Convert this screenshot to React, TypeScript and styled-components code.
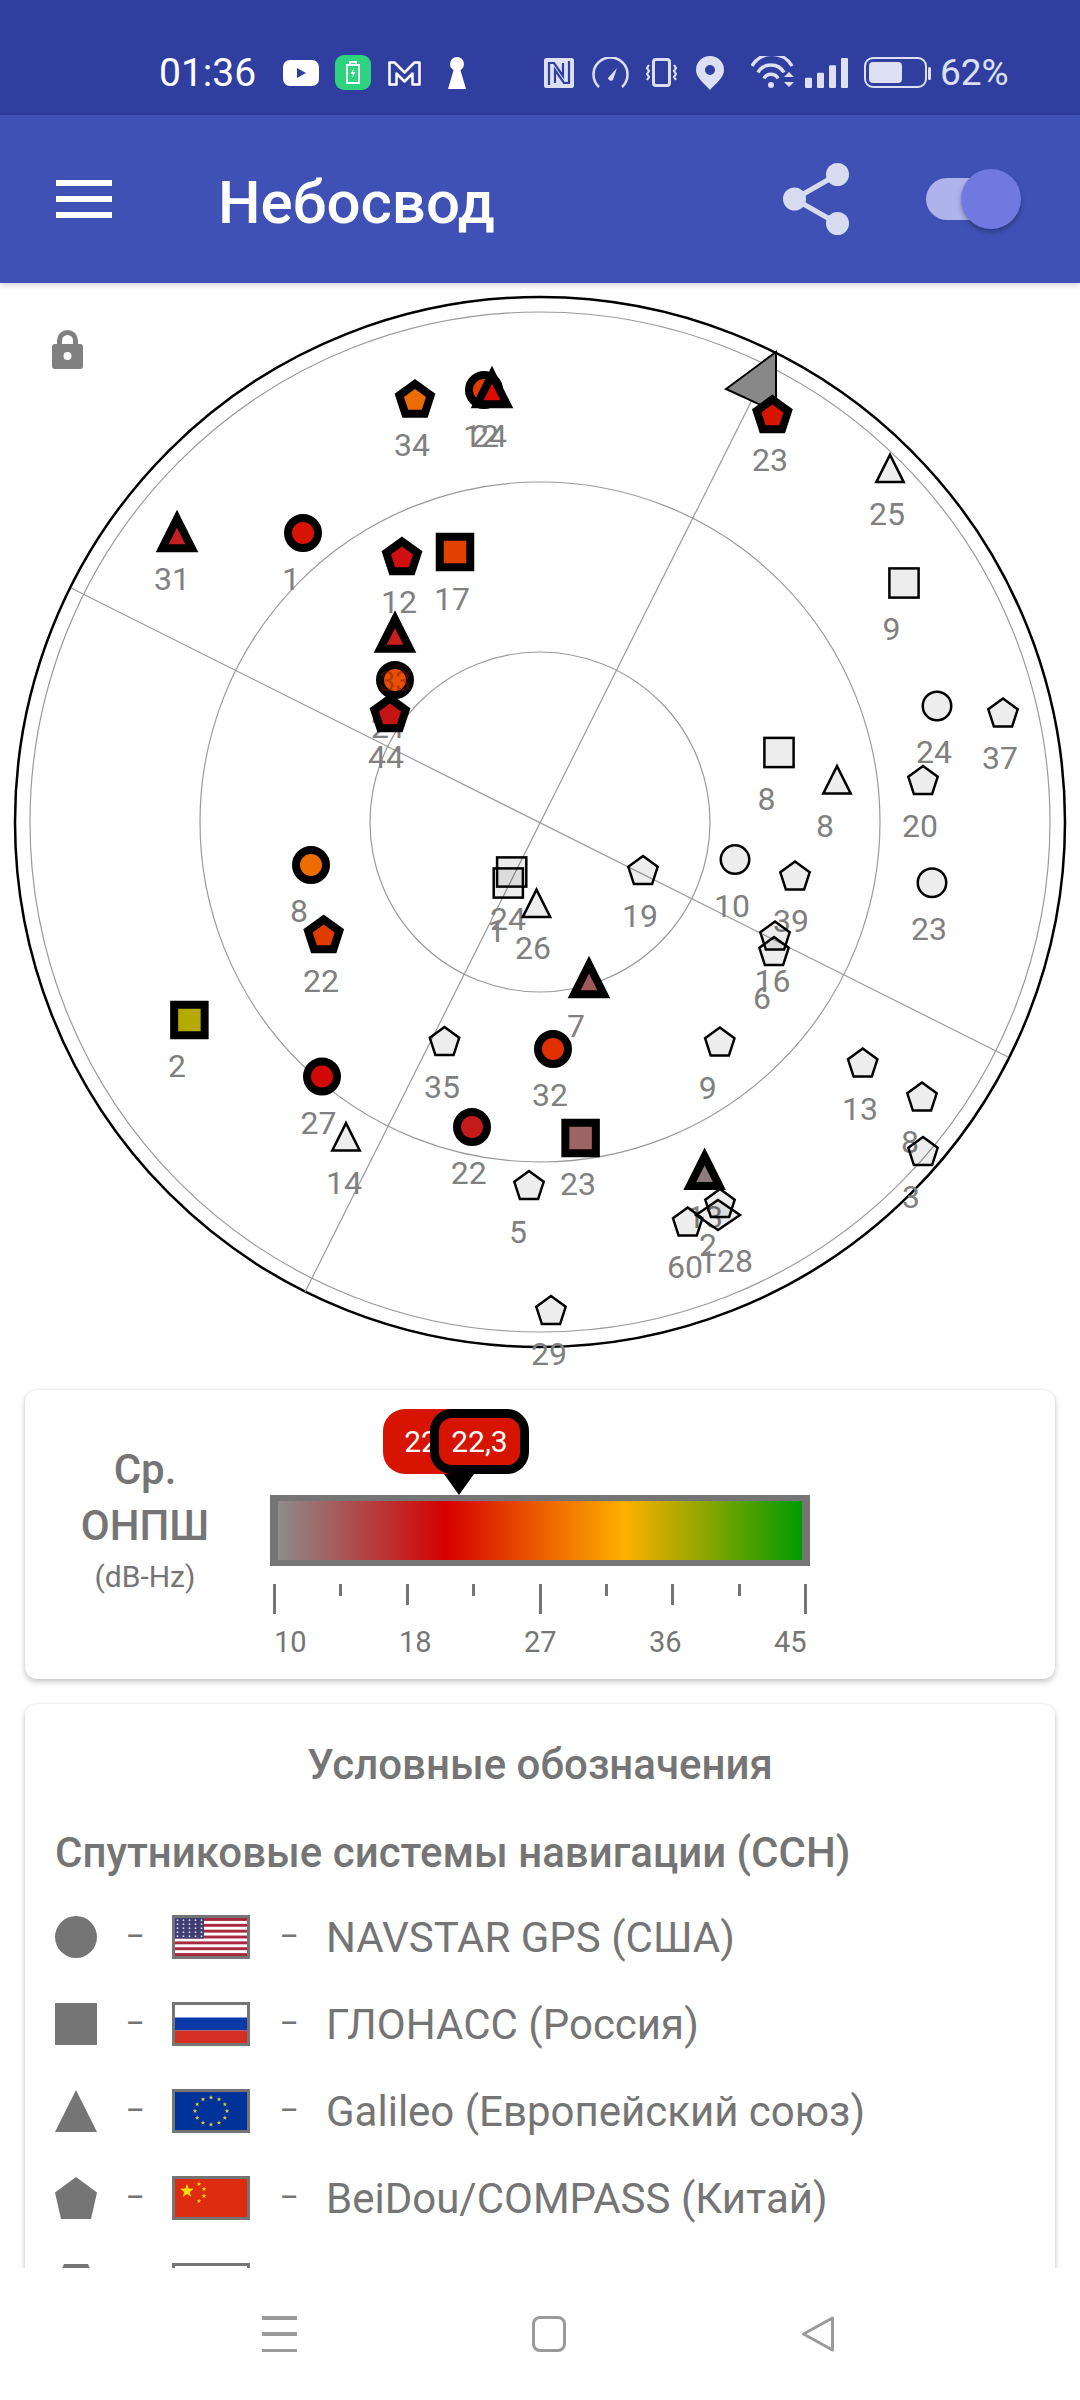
import styled, { createGlobalStyle } from "styled-components";

const GlobalStyle = createGlobalStyle`
    html, body {
        margin: 0;
        padding: 0;
        background: #fff;
        font-family: "Roboto", "Liberation Sans", sans-serif;
    }
`;

type Kind = "circle" | "square" | "triangle" | "pentagon" | "diamond";
type Sat = [Kind, number, number, string?];

// x, y = centre of the symbol's outer box, in page pixels. A fill colour means "used in fix"
const SATS: Sat[] = [
    ["pentagon", 415, 398.5, "#EC6C00"],
    ["circle", 484, 390, "#E03C00"],
    ["triangle", 492, 387, "#DD0C00"],
    ["triangle", 177, 531, "#C42020"],
    ["circle", 303, 533, "#D61400"],
    ["pentagon", 402, 556, "#D01010"],
    ["square", 455, 552, "#E04000"],
    ["triangle", 395, 631.5, "#C81E1E"],
    ["circle", 395, 680, "#E85000"],
    ["pentagon", 390, 713, "#C41414"],
    ["pentagon", 772.4, 414, "#D61400"],
    ["triangle", 890, 467.7],
    ["square", 904, 583],
    ["circle", 937, 706],
    ["pentagon", 1003, 712.5],
    ["square", 779, 752.5],
    ["triangle", 837, 779],
    ["pentagon", 923, 780],
    ["circle", 311, 865, "#EC6C00"],
    ["pentagon", 323.7, 934, "#E03C00"],
    ["square", 189.4, 1020, "#B4AA00"],
    ["circle", 322, 1076.5, "#D00808"],
    ["triangle", 346, 1136],
    ["pentagon", 444.5, 1041],
    ["circle", 472, 1127, "#C41A1A"],
    ["pentagon", 529, 1185],
    ["square", 511.7, 872],
    ["square", 508.3, 883],
    ["triangle", 536.5, 902.5],
    ["pentagon", 643, 870],
    ["circle", 735, 859.6],
    ["pentagon", 795, 875.5],
    ["pentagon", 775, 935.5],
    ["pentagon", 774, 951],
    ["circle", 932, 882.7],
    ["triangle", 589, 977, "#A05858"],
    ["circle", 553, 1049, "#E03000"],
    ["pentagon", 719.8, 1041.5],
    ["pentagon", 862.7, 1062.5],
    ["pentagon", 922, 1096.5],
    ["pentagon", 923, 1151],
    ["square", 580.6, 1138, "#9C6464"],
    ["triangle", 704.6, 1168.7, "#8C7C7C"],
    ["pentagon", 720, 1203],
    ["diamond", 718, 1215],
    ["pentagon", 687.7, 1221.5],
    ["pentagon", 551, 1310],
];

const LABELS: [string, number, number][] = [
    ["34", 412, 445], ["12", 481, 436], ["24", 489, 436], ["31", 172, 579], ["1", 291, 579],
    ["12", 399, 602], ["17", 452, 599], ["21", 389, 727], ["44", 386, 757], ["23", 770, 460],
    ["25", 887, 514], ["9", 891.6, 628.5], ["24", 934, 752], ["37", 1000, 758], ["8", 766.6, 799],
    ["8", 825, 825.5], ["20", 920, 825.5], ["8", 299, 911], ["22", 321, 981], ["2", 177, 1066],
    ["27", 318.5, 1122.7], ["14", 344, 1183], ["35", 442, 1086.5], ["22", 468.7, 1172.6],
    ["5", 518, 1232], ["24", 508, 918.5], ["1", 496.5, 930.5], ["26", 533, 948], ["19", 640, 916],
    ["10", 732, 906], ["39", 791, 921], ["16", 772.4, 981], ["6", 762, 997.7], ["23", 929, 929],
    ["7", 576, 1026], ["32", 550, 1095], ["9", 707.7, 1088], ["13", 860, 1108.5], ["8", 910, 1142],
    ["3", 911, 1196.7], ["23", 578, 1183.6], ["13", 705, 1216.7], ["2", 708, 1245], ["1", 707.7, 1261.7],
    ["28", 735, 1260.7], ["60", 685, 1266.7], ["29", 549, 1354],
];

const polygon = (pts: number[][]) => pts.map((p) => p.map((v) => v.toFixed(1)).join(",")).join(" ");

const pentagon = (cx: number, cy: number, r: number) =>
    polygon(
        [0, 1, 2, 3, 4].map((i) => {
            const a = -Math.PI / 2 + (i * 2 * Math.PI) / 5;
            return [cx + r * Math.cos(a), cy + r * Math.sin(a)];
        })
    );

const star = (cx: number, cy: number, r: number) =>
    polygon(
        Array.from({ length: 10 }, (_, i) => {
            const a = -Math.PI / 2 + (i * Math.PI) / 5;
            const d = i % 2 ? r * 0.42 : r;
            return [cx + d * Math.cos(a), cy + d * Math.sin(a)];
        })
    );

const SatSymbol = ({ sat }: { sat: Sat }) => {
    const [kind, x, y, fill] = sat;
    const strong = !!fill;
    const props = { $fill: fill };
    if (kind === "circle") return <SatCircle {...props} cx={x} cy={y} r={strong ? 15 : 14.25} />;
    if (kind === "square") {
        const s = strong ? 30.5 : 29.2;
        return <SatRect {...props} x={x - s / 2} y={y - s / 2} width={s} height={s} />;
    }
    if (kind === "pentagon") {
        return strong ? (
            <SatPoly {...props} points={pentagon(x, y + 2, 16.5)} />
        ) : (
            <SatPoly {...props} points={pentagon(x, y + 1.6, 15.5)} />
        );
    }
    if (kind === "diamond") {
        return <SatPoly {...props} points={polygon([[x, y - 15], [x + 22, y], [x, y + 15], [x - 22, y]])} />;
    }
    const pts = strong
        ? [[x, y - 21.2 + 8.9], [x + 14.8, y + 21.2 - 4], [x - 14.8, y + 21.2 - 4]]
        : [[x, y - 15.7 + 2.8], [x + 13.7, y + 15.7 - 1.25], [x - 13.7, y + 15.7 - 1.25]];
    return <SatPoly {...props} points={polygon(pts)} />;
};

const Radar = () => (
    <RadarSvg viewBox="0 283 1080 1107">
        <OuterRing cx={540} cy={822} r={525} />
        <Ring cx={540} cy={822} r={510} />
        <Ring cx={540} cy={822} r={340} />
        <Ring cx={540} cy={822} r={170} />
        <Ring as="line" x1={71} y1={588} x2={1008} y2={1057} />
        <Ring as="line" x1={305} y1={1292} x2={776} y2={352} />
        <path
            d="M52 347a3 3 0 0 1 3-3h2v-3.500a10.500 10.500 0 0 1 21 0v3.500h2a3 3 0 0 1 3 3v19a3 3 0 0 1-3 3H55a3 3 0 0 1-3-3zM62 344h11v-3.500a5.500 5.500 0 0 0-11 0zM67.500 352a4 4 0 1 0 0 8 4 4 0 0 0 0-8z"
            fill="#808080"
            fillRule="evenodd"
        />
        {LABELS.map(([t, x, y], i) => (
            <SatLabel key={i} x={x} y={y + 11.3}>
                {t}
            </SatLabel>
        ))}
        <NorthMark points="776,352 726,389 776,412" />
        {SATS.map((s, i) => (
            <SatSymbol key={i} sat={s} />
        ))}
        <GhostLabel x={395} y={690.5}>
            33
        </GhostLabel>
    </RadarSvg>
);

const USFlag = () => (
    <svg width="72" height="38" viewBox="0 0 72 38">
        <rect width="72" height="38" fill="#fff" />
        {Array.from({ length: 7 }, (_, i) => (
            <rect key={i} y={i * 5.85} width="72" height="2.92" fill="#A8283F" />
        ))}
        <rect width="29" height="20.500" fill="#3F3D73" />
        {Array.from({ length: 25 }, (_, i) => (
            <circle key={i} cx={2.5 + (i % 5) * 6} cy={2.2 + Math.floor(i / 5) * 4} r="0.9" fill="#dcdcec" />
        ))}
    </svg>
);

const RUFlag = () => (
    <svg width="72" height="38" viewBox="0 0 72 38">
        <rect width="72" height="13" fill="#fff" />
        <rect y="12.500" width="72" height="13" fill="#0A3AA8" />
        <rect y="25.500" width="72" height="12.500" fill="#D42F22" />
    </svg>
);

const EUFlag = () => (
    <svg width="72" height="38" viewBox="0 0 72 38">
        <rect width="72" height="38" fill="#003399" />
        {Array.from({ length: 12 }, (_, i) => {
            const a = (i * Math.PI) / 6;
            return <polygon key={i} points={star(36 + 16 * Math.sin(a), 19 + 13.500 * Math.cos(a), 2.4)} fill="#E6C83C" />;
        })}
    </svg>
);

const CNFlag = () => (
    <svg width="72" height="38" viewBox="0 0 72 38">
        <rect width="72" height="38" fill="#DE2C10" />
        <polygon points={star(12, 12, 7)} fill="#FFDE00" />
        <polygon points={star(24, 5, 2.4)} fill="#FFDE00" />
        <polygon points={star(29, 10, 2.4)} fill="#FFDE00" />
        <polygon points={star(29, 17, 2.4)} fill="#FFDE00" />
        <polygon points={star(24, 22, 2.4)} fill="#FFDE00" />
    </svg>
);

const LegendShape = ({ kind }: { kind: string }) => (
    <svg width="42" height="42" viewBox="0 0 42 42" fill="#757575">
        {kind === "circle" && <circle cx="21" cy="21" r="21" />}
        {kind === "square" && <rect width="42" height="42" />}
        {kind === "triangle" && <polygon points="21,0 42,42 0,42" />}
        {kind === "pentagon" && <polygon points="21,0 42,15.500 36,42 6,42 0,15.500" />}
        {kind === "cut" && <polygon points="9,0 33,0 42,20 33,42 9,42 0,20" />}
    </svg>
);

const LEGEND = [
    { kind: "circle", flag: <USFlag />, name: "NAVSTAR GPS (США)" },
    { kind: "square", flag: <RUFlag />, name: "ГЛОНАСС (Россия)" },
    { kind: "triangle", flag: <EUFlag />, name: "Galileo (Европейский союз)" },
    { kind: "pentagon", flag: <CNFlag />, name: "BeiDou/COMPASS (Китай)" },
    { kind: "cut", flag: <svg width="72" height="38" />, name: "" },
];

const TICKS = [30, 12, 21, 12, 30, 12, 21, 12, 30];
const SCALE_LABELS = ["10", "18", "27", "36", "45"];

const App = () => (
    <Screen>
        <GlobalStyle />
        <StatusBar>
            <Clock>01:36</Clock>
            <StatusIcon $gap={30} width="36" height="26" viewBox="0 0 36 26">
                <rect width="36" height="26" rx="7" fill="#fff" />
                <path d="M14 8l9 5-9 5z" fill="#303F9F" />
            </StatusIcon>
            <StatusIcon $gap={16} width="36" height="35" viewBox="0 0 36 35">
                <rect width="36" height="35" rx="9" fill="#2FD27F" />
                <path d="M12 10h12v18H12zM15 7h6v3h-6z" fill="none" stroke="#fff" strokeWidth="1.800" />
                <path d="M19 13l-3.500 6h2.500l-1 4 3.500-6h-2.500z" fill="#fff" />
            </StatusIcon>
            <StatusIcon $gap={17} width="33" height="26" viewBox="0 0 33 26">
                <path
                    d="M1.500 24.500V2.500h5l10 10 10-10h5v22h-7v-11l-8 8-8-8v11z"
                    fill="none"
                    stroke="#fff"
                    strokeWidth="2.500"
                    strokeLinejoin="round"
                />
            </StatusIcon>
            <StatusIcon $gap={27} width="18" height="32" viewBox="0 0 18 32">
                <circle cx="9" cy="7" r="7" fill="#fff" />
                <path d="M6.500 10h5L18 32H0z" fill="#fff" />
            </StatusIcon>
            <StatusIcon $gap={78} width="30" height="30" viewBox="0 0 30 30">
                <rect width="30" height="30" rx="2.500" fill="#DDE0F2" />
                <path
                    d="M5 27V5h5l9 13V5M11 25V12l9 13h5V3"
                    fill="none"
                    stroke="#303F9F"
                    strokeWidth="2.200"
                />
            </StatusIcon>
            <StatusIcon $gap={18} width="37" height="31" viewBox="0 0 37 31">
                <path d="M7 30a17 17 0 1 1 23 0" fill="none" stroke="#DDE0F2" strokeWidth="2.500" />
                <path d="M16 21l9-10-4 12a3 3 0 0 1-5-2z" fill="#DDE0F2" />
            </StatusIcon>
            <StatusIcon $gap={17} width="31" height="29" viewBox="0 0 31 29">
                <rect x="7.500" y="1.500" width="16" height="26" rx="2.500" fill="none" stroke="#DDE0F2" strokeWidth="3" />
                <path
                    d="M3 7l-2 3 2 3-2 3 2 3-2 3M28 7l2 3-2 3 2 3-2 3 2 3"
                    fill="none"
                    stroke="#DDE0F2"
                    strokeWidth="2.200"
                />
            </StatusIcon>
            <StatusIcon $gap={19} width="28" height="34" viewBox="0 0 28 34">
                <path
                    d="M14 0a14 14 0 0 1 14 14c0 8-9 14-14 20C9 28 0 22 0 14A14 14 0 0 1 14 0zm0 9a5 5 0 1 0 0 10 5 5 0 0 0 0-10z"
                    fill="#DDE0F2"
                    fillRule="evenodd"
                />
            </StatusIcon>
            <StatusIcon $gap={27} width="44" height="33" viewBox="0 0 44 33">
                <path d="M1 10a23 23 0 0 1 40 0M7 16.500a15 15 0 0 1 26 0M13 22.500a8 8 0 0 1 14 0" fill="none" stroke="#DDE0F2" strokeWidth="3.500" />
                <circle cx="20" cy="29" r="3" fill="#DDE0F2" />
                <path d="M33 21l5-5 5 5zM33 26l5 5 5-5z" fill="#DDE0F2" />
            </StatusIcon>
            <StatusIcon $gap={10} width="43" height="30" viewBox="0 0 43 30">
                <rect x="0" y="19.700" width="7" height="10.300" rx="1" fill="#DDE0F2" />
                <rect x="12" y="14.700" width="7" height="15.300" rx="1" fill="#DDE0F2" />
                <rect x="24" y="7.300" width="7" height="22.700" rx="1" fill="#DDE0F2" />
                <rect x="36" y="0" width="7" height="30" rx="1" fill="#DDE0F2" />
            </StatusIcon>
            <StatusIcon $gap={16} width="67" height="31" viewBox="0 0 67 31">
                <rect x="1" y="1" width="61" height="29" rx="8" fill="none" stroke="#DDE0F2" strokeWidth="2" />
                <rect x="5" y="5" width="33" height="21" rx="4" fill="#DDE0F2" />
                <rect x="64" y="10" width="3" height="13" rx="1.500" fill="#DDE0F2" />
            </StatusIcon>
            <Percent>62%</Percent>
        </StatusBar>

        <AppBar>
            <Burger>
                <span />
                <span />
                <span />
            </Burger>
            <Title>Небосвод</Title>
            <ShareIcon width="66" height="72" viewBox="0 0 66 72">
                <circle cx="54.500" cy="11.500" r="11.500" />
                <circle cx="11.500" cy="36" r="11.500" />
                <circle cx="54.500" cy="60.500" r="11.500" />
                <path d="M54.500 11.500L11.500 36l43 24.500" fill="none" stroke="#D8DCF0" strokeWidth="5" />
            </ShareIcon>
            <Switch>
                <Knob />
            </Switch>
        </AppBar>

        <Main>
            <Radar />

            <Card $height={289}>
                <SnrTitle>
                    <b>Ср.</b>
                    <b>ОНПШ</b>
                    <small>(dB-Hz)</small>
                </SnrTitle>
                <Scale>
                    <Bubble $left={113}>22,3</Bubble>
                    <Bubble $left={160} $active>
                        22,3
                    </Bubble>
                    <Pointer />
                    <GradientBar />
                    <TickRow>
                        {TICKS.map((h, i) => (
                            <Tick key={i} $h={h} />
                        ))}
                    </TickRow>
                    <ScaleLabels>
                        {SCALE_LABELS.map((l) => (
                            <span key={l}>{l}</span>
                        ))}
                    </ScaleLabels>
                </Scale>
            </Card>

            <LegendCard>
                <LegendTitle>Условные обозначения</LegendTitle>
                <LegendSub>Спутниковые системы навигации (ССН)</LegendSub>
                <LegendList>
                    {LEGEND.map((row) => (
                        <LegendRow key={row.kind}>
                            <LegendShape kind={row.kind} />
                            <Dash>–</Dash>
                            <Flag>{row.flag}</Flag>
                            <Dash>–</Dash>
                            <LegendName>{row.name}</LegendName>
                        </LegendRow>
                    ))}
                </LegendList>
            </LegendCard>
        </Main>

        <NavBar>
            <NavMenu>
                <span />
                <span />
                <span />
            </NavMenu>
            <NavHome />
            <svg width="34" height="36" viewBox="0 0 34 36">
                <path d="M31.500 2L2.500 18l29 16z" fill="none" stroke="#9A9A9A" strokeWidth="3" strokeLinejoin="round" />
            </svg>
        </NavBar>
    </Screen>
);

export default App;

const Screen = styled.div`
    width: 1080px;
    height: 2400px;
    display: flex;
    flex-direction: column;
    overflow: hidden;
    background: #fff;
`;

const StatusBar = styled.div`
    height: 115px;
    box-sizing: border-box;
    padding: 30px 0 0 159px;
    display: flex;
    align-items: center;
    background: #303f9f;
    flex: none;
`;

const Clock = styled.span`
    font-size: 39px;
    color: #fff;
    width: 94px;
`;

const StatusIcon = styled.svg<{ $gap: number }>`
    margin-left: ${(p) => p.$gap}px;
    flex: none;
`;

const Percent = styled.span`
    margin-left: 9px;
    font-size: 37px;
    color: #dde0f2;
`;

const AppBar = styled.header`
    height: 168px;
    flex: none;
    box-sizing: border-box;
    padding-left: 56px;
    display: flex;
    align-items: center;
    background: #3f51b5;
    box-shadow: 0 2px 6px rgba(0, 0, 0, 0.2);
    position: relative;
    z-index: 1;
`;

const Burger = styled.div`
    width: 56px;
    display: flex;
    flex-direction: column;
    gap: 10px;

    span {
        height: 6px;
        background: #fff;
    }
`;

const Title = styled.h1`
    margin: 6px 0 0 106px;
    width: 565px;
    font-size: 60px;
    font-weight: 500;
    color: #fff;
`;

const ShareIcon = styled.svg`
    fill: #d8dcf0;
    flex: none;
`;

const Switch = styled.div`
    margin-left: 77px;
    width: 84px;
    height: 42px;
    border-radius: 21px;
    background: #aeb3ec;
    position: relative;
`;

const Knob = styled.div`
    position: absolute;
    left: 35px;
    top: -9px;
    width: 60px;
    height: 60px;
    border-radius: 50%;
    background: #7079e0;
    box-shadow: 0 3px 5px rgba(0, 0, 0, 0.3);
`;

const Main = styled.main`
    flex: 1;
    min-height: 0;
    overflow: hidden;
`;

const RadarSvg = styled.svg`
    display: block;
    width: 1080px;
    height: 1107px;
`;

const Ring = styled.circle`
    fill: none;
    stroke: #9a9a9a;
    stroke-width: 1.2;
`;

const OuterRing = styled.circle`
    fill: none;
    stroke: #000;
    stroke-width: 2.5;
`;

const NorthMark = styled.polygon`
    fill: #888;
    stroke: #000;
    stroke-width: 2;
`;

const SatLabel = styled.text`
    font-family: "Roboto", sans-serif;
    font-size: 32px;
    fill: #808080;
    text-anchor: middle;
`;

const GhostLabel = styled(SatLabel)`
    font-size: 28px;
    fill: rgba(120, 30, 0, 0.5);
`;

const satShape = (p: { $fill?: string }) => `
    fill: ${p.$fill ?? "rgba(0, 0, 0, 0.07)"};
    stroke: #000;
    stroke-width: ${p.$fill ? 8 : 2.5};
    stroke-miterlimit: 12;
`;

const SatCircle = styled.circle<{ $fill?: string }>`
    ${satShape}
`;

const SatRect = styled.rect<{ $fill?: string }>`
    ${satShape}
`;

const SatPoly = styled.polygon<{ $fill?: string }>`
    ${satShape}
`;

const Card = styled.section<{ $height: number }>`
    margin: 0 25px;
    height: ${(p) => p.$height}px;
    display: flex;
    background: #fff;
    border-radius: 12px;
    box-shadow: 0 3px 6px rgba(0, 0, 0, 0.22), 0 0 2px rgba(0, 0, 0, 0.1);
`;

const SnrTitle = styled.div`
    width: 240px;
    margin-right: 5px;
    padding-top: 52px;
    box-sizing: border-box;
    display: flex;
    flex-direction: column;
    align-items: center;
    color: #757575;

    b {
        font-size: 42px;
        font-weight: 500;
        line-height: 56px;
    }

    small {
        margin-top: 5px;
        font-size: 30px;
        line-height: 36px;
    }
`;

const Scale = styled.div`
    width: 540px;
    padding-top: 105px;
    position: relative;
`;

const Bubble = styled.div<{ $left: number; $active?: boolean }>`
    position: absolute;
    top: 19px;
    left: ${(p) => p.$left}px;
    width: 99px;
    height: 65px;
    box-sizing: border-box;
    display: flex;
    align-items: center;
    justify-content: center;
    border-radius: 22px;
    background: #d61400;
    border: ${(p) => (p.$active ? "9px solid #000" : "none")};
    color: #fff;
    font-size: 30px;
`;

const Pointer = styled.div`
    position: absolute;
    top: 84px;
    left: 174px;
    border-top: 21px solid #000;
    border-left: 15px solid transparent;
    border-right: 15px solid transparent;
`;

const GradientBar = styled.div`
    height: 71px;
    box-sizing: border-box;
    border-style: solid;
    border-color: #757575;
    border-width: 6px 8px;
    background: linear-gradient(to right, #8c8c8c 0%, #d60000 32%, #ffb000 66%, #009b00 100%);
`;

const TickRow = styled.div`
    margin: 18px 3px 0;
    display: flex;
    justify-content: space-between;
    align-items: flex-start;
`;

const Tick = styled.div<{ $h: number }>`
    width: 3px;
    height: ${(p) => p.$h}px;
    background: #757575;
`;

const ScaleLabels = styled.div`
    margin-top: 11px;
    padding-left: 4px;
    display: grid;
    grid-template-columns: repeat(5, 125px);
    font-size: 29px;
    line-height: 34px;
    color: #757575;
`;

const LegendCard = styled.section`
    margin: 25px 25px 0;
    padding: 33px 30px 0;
    height: 800px;
    box-sizing: border-box;
    background: #fff;
    border-radius: 12px;
    box-shadow: 0 3px 6px rgba(0, 0, 0, 0.22), 0 0 2px rgba(0, 0, 0, 0.1);
    color: #757575;
`;

const LegendTitle = styled.h2`
    margin: 0;
    font-size: 42px;
    font-weight: 500;
    line-height: 56px;
    text-align: center;
`;

const LegendSub = styled.h3`
    margin: 32px 0 12px;
    font-size: 42px;
    font-weight: 500;
    line-height: 56px;
`;

const LegendList = styled.div`
    display: grid;
    grid-auto-rows: 87px;
`;

const LegendRow = styled.div`
    display: grid;
    grid-template-columns: 71px 46px 108px 46px 1fr;
    align-items: center;
`;

const Dash = styled.span`
    font-size: 28px;
    font-weight: 500;
    line-height: 1;
`;

const Flag = styled.div`
    width: 72px;
    height: 38px;
    border: 3px solid #757575;

    svg {
        display: block;
    }
`;

const LegendName = styled.span`
    padding-top: 3px;
    font-size: 42px;
    line-height: 48px;
`;

const NavBar = styled.nav`
    height: 132px;
    flex: none;
    box-sizing: border-box;
    padding-left: 17px;
    display: flex;
    align-items: center;
    justify-content: center;
    gap: 235px;
    background: #fff;
    position: relative;
    z-index: 1;
`;

const NavMenu = styled.div`
    width: 35px;
    height: 36px;
    display: flex;
    flex-direction: column;
    justify-content: space-between;

    span {
        height: 3.5px;
        background: #9a9a9a;
    }
`;

const NavHome = styled.div`
    width: 34px;
    height: 36px;
    box-sizing: border-box;
    border: 3px solid #9a9a9a;
    border-radius: 8px;
`;
